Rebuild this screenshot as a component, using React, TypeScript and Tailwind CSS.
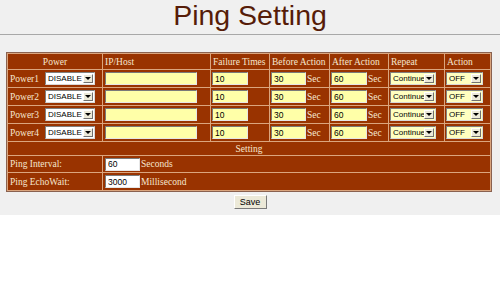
import React from 'react';

const powers = ['Power1', 'Power2', 'Power3', 'Power4'];

const serif = 'font-["Liberation_Serif",serif]';
const sans = 'font-["Liberation_Sans",Arial,sans-serif]';

function FakeSelect({ value, className }: { value: string; className: string }) {
  return (
    <div
      className={`flex h-[13px] items-stretch border border-t-[#808080] border-l-[#808080] border-r-[#d8d8d8] border-b-[#d8d8d8] ${className}`}
    >
      <span className={`flex-1 overflow-hidden pl-[2px] text-[8px] leading-[11px] text-black ${sans}`}>
        {value}
      </span>
      <span className="my-px mr-px flex w-[10px] items-center justify-center border border-t-white border-l-white border-r-[#707070] border-b-[#707070] bg-[#ece9d8]">
        <span className="h-0 w-0 border-x-[3px] border-t-[3px] border-x-transparent border-t-black" />
      </span>
    </div>
  );
}

function TextBox({ value, className }: { value: string; className: string }) {
  return (
    <input
      readOnly
      value={value}
      className={`h-[13px] border border-t-[#7a7a7a] border-l-[#7a7a7a] border-r-[#e6e6e6] border-b-[#e6e6e6] pl-[2px] text-[8.5px] leading-[11px] text-black outline-none ${sans} ${className}`}
    />
  );
}

export default function App() {
  return (
    <div className="min-h-[289px] w-[500px] bg-white">
      <div className="h-[215px] bg-[#f0f0f0]">
        {/* title */}
        <h1
          className={`h-[34px] text-center text-[28.5px] leading-[30px] text-[#561c08] ${sans}`}
        >
          Ping Setting
        </h1>
        <div className="h-px bg-[#a8a8a8]" />

        {/* settings table */}
        <div className="ml-[6px] mt-[17px] w-[486px] border border-[#8a6250] bg-[#dba57e]">
          <table
            className={`table-fixed border-separate border-spacing-[1px] text-[9.5px] leading-[12px] text-[#f6e6cf] ${serif}`}
          >
            <colgroup>
              <col className="w-[94px]" />
              <col className="w-[107px]" />
              <col className="w-[58px]" />
              <col className="w-[59px]" />
              <col className="w-[58px]" />
              <col className="w-[55px]" />
              <col className="w-[45px]" />
            </colgroup>
            <tbody>
              <tr className="bg-[#993300]">
                <td className="h-[15px] p-0 text-center">Power</td>
                <td className="p-0 pl-[2px]">IP/Host</td>
                <td className="p-0 pl-[2px] whitespace-nowrap">Failure Times</td>
                <td className="p-0 pl-[2px] whitespace-nowrap">Before Action</td>
                <td className="p-0 pl-[2px] whitespace-nowrap">After Action</td>
                <td className="p-0 pl-[2px]">Repeat</td>
                <td className="p-0 pl-[2px]">Action</td>
              </tr>
              {powers.map((name) => (
                <tr key={name} className="bg-[#993300]">
                  <td className="h-[17px] p-0">
                    <div className="flex items-center pl-[2px]">
                      <span className="w-[35px]">{name}</span>
                      <FakeSelect value="DISABLE" className="w-[50px] bg-white" />
                    </div>
                  </td>
                  <td className="p-0 pl-[2px]">
                    <TextBox value="" className="w-[92px] bg-[#ffffa8]" />
                  </td>
                  <td className="p-0 pl-px">
                    <TextBox value="10" className="w-[36px] bg-[#ffffa8]" />
                  </td>
                  <td className="p-0 pl-px">
                    <div className="flex items-center">
                      <TextBox value="30" className="w-[35px] bg-[#ffffa8]" />
                      <span className="pl-px">Sec</span>
                    </div>
                  </td>
                  <td className="p-0 pl-px">
                    <div className="flex items-center">
                      <TextBox value="60" className="w-[36px] bg-[#ffffa8]" />
                      <span className="pl-px">Sec</span>
                    </div>
                  </td>
                  <td className="p-0 pl-px">
                    <FakeSelect value="Continue" className="w-[46px] bg-[#ffffc0]" />
                  </td>
                  <td className="p-0 pl-px">
                    <FakeSelect value="OFF" className="w-[37px] bg-[#ffffc0]" />
                  </td>
                </tr>
              ))}
              <tr className="bg-[#993300]">
                <td colSpan={7} className="h-[13px] p-0 text-center">
                  Setting
                </td>
              </tr>
              <tr className="bg-[#993300]">
                <td className="h-[16px] p-0 pl-[2px]">Ping Interval:</td>
                <td colSpan={6} className="p-0 pl-[2px]">
                  <div className="flex items-center">
                    <TextBox value="60" className="w-[35px] bg-white" />
                    <span className="pl-px">Seconds</span>
                  </div>
                </td>
              </tr>
              <tr className="bg-[#993300]">
                <td className="h-[17px] p-0 pl-[2px]">Ping EchoWait:</td>
                <td colSpan={6} className="p-0 pl-[2px]">
                  <div className="flex items-center">
                    <TextBox value="3000" className="w-[35px] bg-white" />
                    <span className="pl-px">Millisecond</span>
                  </div>
                </td>
              </tr>
            </tbody>
          </table>
        </div>

        {/* save */}
        <div className="mt-[3px] flex justify-center">
          <button
            className={`h-[14px] w-[33px] border border-t-white border-l-white border-r-[#7a7a7a] border-b-[#7a7a7a] bg-[#ece9d8] text-[9px] leading-[12px] text-black ${sans}`}
          >
            Save
          </button>
        </div>
      </div>
    </div>
  );
}
